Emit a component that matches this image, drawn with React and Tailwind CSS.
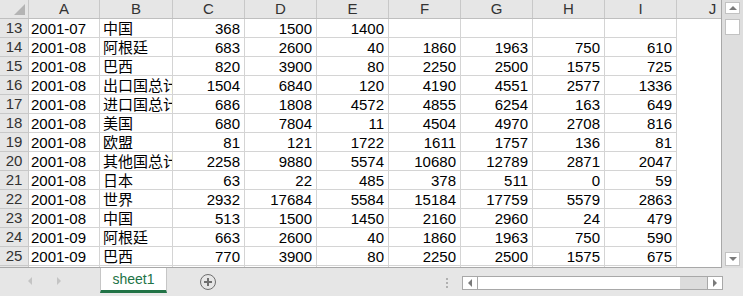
import React from "react";

const cols = ["A", "B", "C", "D", "E", "F", "G", "H", "I", "J"];
const widths = ["w-[71px]", "w-[73px]", "w-[72px]", "w-[72px]", "w-[72px]", "w-[72px]", "w-[72px]", "w-[72px]", "w-[72px]", "w-[72px]"];

const rows = [
  [13, "2001-07", "中国", 368, 1500, 1400, "", "", "", ""],
  [14, "2001-08", "阿根廷", 683, 2600, 40, 1860, 1963, 750, 610],
  [15, "2001-08", "巴西", 820, 3900, 80, 2250, 2500, 1575, 725],
  [16, "2001-08", "出口国总计", 1504, 6840, 120, 4190, 4551, 2577, 1336],
  [17, "2001-08", "进口国总计", 686, 1808, 4572, 4855, 6254, 163, 649],
  [18, "2001-08", "美国", 680, 7804, 11, 4504, 4970, 2708, 816],
  [19, "2001-08", "欧盟", 81, 121, 1722, 1611, 1757, 136, 81],
  [20, "2001-08", "其他国总计", 2258, 9880, 5574, 10680, 12789, 2871, 2047],
  [21, "2001-08", "日本", 63, 22, 485, 378, 511, 0, 59],
  [22, "2001-08", "世界", 2932, 17684, 5584, 15184, 17759, 5579, 2863],
  [23, "2001-08", "中国", 513, 1500, 1450, 2160, 2960, 24, 479],
  [24, "2001-09", "阿根廷", 663, 2600, 40, 1860, 1963, 750, 590],
  [25, "2001-09", "巴西", 770, 3900, 80, 2250, 2500, 1575, 675],
  [26, "", "", "", "", "", "", "", "", ""],
];

const font = { fontFamily: '"Liberation Sans", "Noto Sans CJK SC", sans-serif' };

function HeaderRow() {
  return (
    <div className="flex h-[19px] shrink-0 bg-[#e6e6e6] border-b border-[#bfbfbf]">
      <div className="w-[29px] shrink-0 border-r border-[#c8c8c8] relative">
        <div className="absolute right-[3px] bottom-[3px] w-0 h-0 border-l-[11px] border-l-transparent border-b-[11px] border-b-[#b4b4b4]" />
      </div>
      {cols.map((c, i) => (
        <div
          key={c}
          className={`${widths[i]} shrink-0 border-r border-[#c8c8c8] text-center text-[15px] leading-[18px] text-[#333]`}
        >
          {c}
        </div>
      ))}
    </div>
  );
}

function DataRow({ r }) {
  const [num, ...cells] = r;
  return (
    <div className="flex h-[19px] shrink-0">
      <div className="w-[29px] shrink-0 bg-[#e6e6e6] border-r border-b border-[#c8c8c8] text-center text-[15px] leading-[18px] text-[#333]">
        {num}
      </div>
      {cells.map((v, i) => (
        <div
          key={i}
          className={`${widths[i]} shrink-0 border-r border-b border-[#d4d4d4] overflow-hidden whitespace-nowrap text-[15px] leading-[19px] text-black ${
            i < 2 ? "text-left pl-[2px]" : "text-right pr-[4px]"
          } ${i === 1 ? "pl-[3px]" : ""}`}
        >
          {v}
        </div>
      ))}
    </div>
  );
}

function VScroll() {
  return (
    <div className="w-[21px] shrink-0 bg-[#dedede] flex flex-col items-center pt-[2px] pb-[2px]">
      <div className="w-[15px] h-[12px] bg-white border border-[#c2c2c2] flex items-center justify-center">
        <div className="w-0 h-0 border-l-[4px] border-r-[4px] border-b-[4px] border-l-transparent border-r-transparent border-b-[#7a7a7a]" />
      </div>
      <div className="w-[15px] h-[16px] mt-[5px] bg-white border border-[#c2c2c2]" />
      <div className="flex-1" />
      <div className="w-[15px] h-[14px] bg-white border border-[#c2c2c2] flex items-center justify-center">
        <div className="w-0 h-0 border-l-[4px] border-r-[4px] border-t-[4px] border-l-transparent border-r-transparent border-t-[#7a7a7a]" />
      </div>
    </div>
  );
}

function TabBar() {
  return (
    <div className="h-[28px] shrink-0 bg-[#e6e6e6] flex items-start relative">
      <div className="w-[100px] h-[26px] flex items-center">
        <div className="ml-[28px] w-0 h-0 border-t-[4px] border-b-[4px] border-r-[4px] border-t-transparent border-b-transparent border-r-[#c4c4c4]" />
        <div className="ml-[25px] w-0 h-0 border-t-[4px] border-b-[4px] border-l-[4px] border-t-transparent border-b-transparent border-l-[#c4c4c4]" />
      </div>
      <div className="w-[67px] h-[25px] bg-white border-l border-r border-[#c6c6c6] border-b-[3px] border-b-[#217346] flex items-center justify-center text-[14px] text-[#217346] pt-[1px]">
        sheet1
      </div>
      <div className="ml-[33px] mt-[6px] w-[16px] h-[16px] rounded-full border-[1.5px] border-[#6f6f6f] flex items-center justify-center relative">
        <div className="absolute w-[8px] h-[1.5px] bg-[#6f6f6f]" />
        <div className="absolute w-[1.5px] h-[8px] bg-[#6f6f6f]" />
      </div>
      <div className="ml-[230px] mt-[10px] flex flex-col gap-[2px]">
        <div className="w-[2px] h-[2px] bg-[#b0b0b0]" />
        <div className="w-[2px] h-[2px] bg-[#b0b0b0]" />
        <div className="w-[2px] h-[2px] bg-[#b0b0b0]" />
      </div>
      <div className="ml-[14px] mt-[8px] flex h-[14px]">
        <div className="w-[16px] h-[14px] bg-white border border-[#a8a8a8] flex items-center justify-center">
          <div className="w-0 h-0 border-t-[4px] border-b-[4px] border-r-[4px] border-t-transparent border-b-transparent border-r-[#7a7a7a]" />
        </div>
        <div className="w-[202px] h-[14px] bg-white border-t border-b border-[#a8a8a8]" />
        <div className="w-[27px] h-[14px] bg-[#dcdcdc] border-t border-b border-[#a8a8a8]" />
        <div className="w-[16px] h-[14px] bg-white border border-[#a8a8a8] flex items-center justify-center">
          <div className="w-0 h-0 border-t-[4px] border-b-[4px] border-l-[4px] border-t-transparent border-b-transparent border-l-[#7a7a7a]" />
        </div>
      </div>
    </div>
  );
}

export default function App() {
  return (
    <div className="w-[743px] h-[296px] overflow-hidden bg-white flex flex-col" style={font}>
      <div className="flex h-[268px] shrink-0">
        <div className="w-[722px] shrink-0 overflow-hidden border-r border-b border-[#a8a8a8] flex flex-col bg-white">
          <HeaderRow />
          {rows.map((r) => (
            <DataRow key={r[0]} r={r} />
          ))}
        </div>
        <VScroll />
      </div>
      <TabBar />
    </div>
  );
}
